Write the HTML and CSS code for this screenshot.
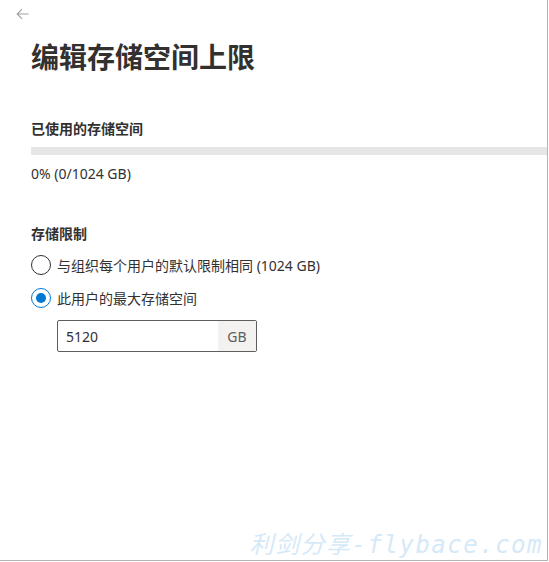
FILE: index.html
```html
<!DOCTYPE html>
<html lang="zh-CN">
<head>
  <meta charset="UTF-8">
  <title>编辑存储空间上限</title>
  <link rel="stylesheet" href="styles.css">
</head>
<body>
  <div class="panel">
    <div class="back-row">
      <button class="back" aria-label="返回">
        <svg width="13" height="12" viewBox="0 0 13 12">
          <path d="M12.5 6H1.2M6 1.2L1.2 6L6 10.8" fill="none" stroke="#a19f9d" stroke-width="1.1"/>
        </svg>
      </button>
    </div>

    <h1>编辑存储空间上限</h1>

    <div class="section-label usage-label">已使用的存储空间</div>
    <div class="bar"><div class="bar-fill" style="width: 0%"></div></div>
    <div class="usage-text">0% (0/1024 GB)</div>

    <div class="section-label limit-label">存储限制</div>
    <div class="choices">
      <label class="choice">
        <input type="radio" name="limit">
        <span class="dot"></span>
        <span>与组织每个用户的默认限制相同 (1024 GB)</span>
      </label>
      <label class="choice">
        <input type="radio" name="limit" checked>
        <span class="dot"></span>
        <span>此用户的最大存储空间</span>
      </label>
    </div>

    <div class="field">
      <input class="field-input" type="text" value="5120">
      <span class="field-suffix">GB</span>
    </div>

    <div class="watermark">利剑分享-flybace.com</div>
  </div>
</body>
</html>
```

FILE: styles.css
```css
body {
  margin: 0;
  background: #ffffff;
  font-family: "Noto Sans", "Noto Sans CJK SC", sans-serif;
  color: #323130;
}
.panel {
  position: relative;
  width: 547px;
  height: 560px;
  border-right: 1px solid #b4b4b4;
  border-bottom: 1px solid #b4b4b4;
  overflow: hidden;
}
.back-row {
  height: 28px;
  padding-left: 16px;
  display: flex;
  align-items: center;
}
.back {
  display: flex;
  padding: 0;
  border: none;
  background: none;
  cursor: pointer;
}
h1 {
  margin: 10px 0 0 31px;
  font-size: 28px;
  line-height: 36px;
  font-weight: 700;
  font-family: "Noto Sans CJK SC", sans-serif;
  color: #323130;
}
.section-label {
  margin-left: 31px;
  font-size: 14px;
  line-height: 20px;
  font-weight: 600;
  font-family: "Noto Sans CJK SC", sans-serif;
}
.usage-label {
  margin-top: 44px;
}
.bar {
  margin: 9px 0 0 31px;
  height: 8px;
  background: #e6e6e6;
}
.bar-fill {
  height: 100%;
  background: #0078d4;
}
.usage-text {
  margin: 9px 0 0 31px;
  font-size: 14px;
  line-height: 20px;
}
.limit-label {
  margin-top: 39px;
}
.choices {
  margin: 12px 0 0 31px;
  display: flex;
  flex-direction: column;
  gap: 13px;
}
.choice {
  display: flex;
  align-items: center;
  gap: 6px;
  height: 20px;
  font-size: 14px;
  font-family: "Noto Sans", "Noto Sans CJK SC", sans-serif;
  cursor: pointer;
}
.choice input {
  display: none;
}
.dot {
  box-sizing: border-box;
  width: 20px;
  height: 20px;
  border: 1px solid #323130;
  border-radius: 50%;
  display: flex;
  align-items: center;
  justify-content: center;
}
.choice input:checked + .dot {
  border-color: #0078d4;
}
.choice input:checked + .dot::after {
  content: "";
  width: 10px;
  height: 10px;
  border-radius: 50%;
  background: #0078d4;
}
.field {
  margin: 12px 0 0 57px;
  width: 200px;
  height: 32px;
  box-sizing: border-box;
  border: 1px solid #605e5c;
  border-radius: 2px;
  display: flex;
}
.field-input {
  flex: 1;
  min-width: 0;
  border: none;
  outline: none;
  padding: 0 8px;
  font-size: 14px;
  font-family: "Noto Sans", sans-serif;
  color: #323130;
  background: transparent;
}
.field-suffix {
  width: 38px;
  background: #f3f2f1;
  color: #605e5c;
  font-size: 14px;
  display: flex;
  align-items: center;
  justify-content: center;
}
.watermark {
  position: absolute;
  right: 4px;
  bottom: 0;
  font-size: 24px;
  line-height: 30px;
  font-style: italic;
  letter-spacing: 1.5px;
  font-family: "DejaVu Sans Mono", "Noto Sans CJK SC", monospace;
  color: #d6e9f8;
  pointer-events: none;
  white-space: nowrap;
}
```
